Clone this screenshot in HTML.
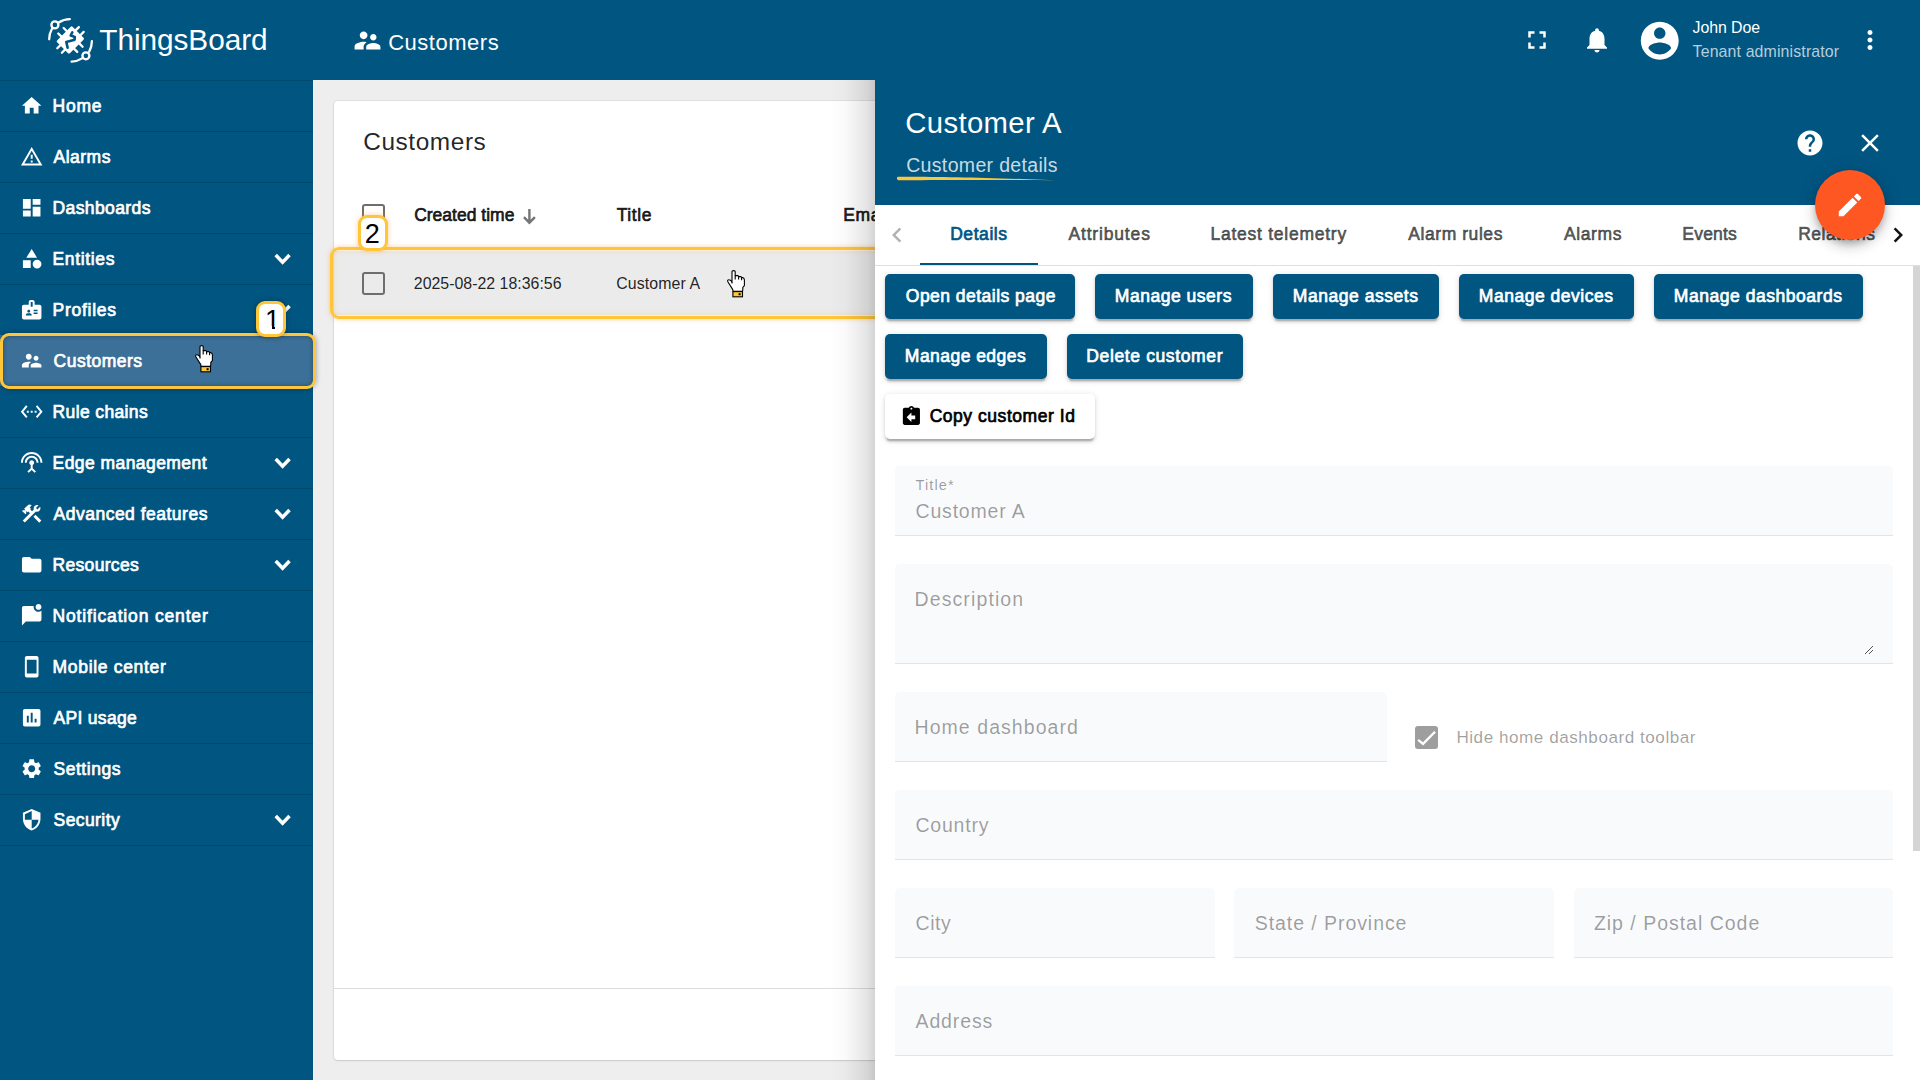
<!DOCTYPE html>
<html lang="en"><head><meta charset="utf-8"><title>ThingsBoard - Customers</title>
<style>
  *{box-sizing:border-box;margin:0;padding:0}
  html,body{width:1920px;height:1080px;overflow:hidden;background:#eee;font-family:"Liberation Sans", sans-serif;}
  #root{position:relative;width:1920px;height:1080px;overflow:hidden}
  #root>*, .abs{position:absolute}
  .tx{position:absolute;white-space:nowrap;line-height:1;font-weight:400}
  .tx.m{-webkit-text-stroke:.7px currentColor}
  .tx.b{font-weight:700}
  .ic{position:absolute;display:block}
  #top{left:0;top:0;width:1920px;height:80px;background:#005581}
  #side{left:0;top:80px;width:313px;height:1000px;background:#005581}
  .dv{position:absolute;left:0;width:313px;height:1px;background:rgba(0,0,0,.14)}
  #card{left:334px;top:101px;width:1566px;height:958.5px;background:#fff;border-radius:4px;box-shadow:0 0 0 1px rgba(0,0,0,.06),0 1px 2px rgba(0,0,0,.10)}
  #pgl{left:334px;top:988px;width:1566px;height:1px;background:#dcdcdc}
  .cb{position:absolute;width:23px;height:23px;border:2.5px solid #6e6e6e;border-radius:3px}
  #rowbg{left:334px;top:251px;width:1566px;height:64px;background:#ebebeb}
  .hl{position:absolute;border:3.3px solid #fec638;border-radius:9px;box-shadow:0 0 5px rgba(255,160,60,.5), inset 0 0 5px rgba(255,160,60,.4)}
.hl.d{box-shadow:0 0 5px rgba(0,0,0,.35), inset 0 0 4px rgba(0,0,0,.35)}
  .bdg{position:absolute;width:30px;height:36px;background:#fff;border:3.3px solid #fec638;border-radius:9px;box-shadow:0 0 5px rgba(255,160,60,.5)}
.bdg.d{box-shadow:0 0 5px rgba(0,0,0,.35)}
  #dsh{left:829px;top:80px;width:46px;height:1000px;background:linear-gradient(to right,rgba(0,0,0,0),rgba(0,0,0,.02) 35%,rgba(0,0,0,.065) 63%,rgba(0,0,0,.105) 83%,rgba(0,0,0,.17))}
#drw{left:875px;top:80px;width:1045px;height:1000px;background:#fff}
  #dhd{left:875px;top:80px;width:1045px;height:124.5px;background:#005581}
  #tabl{left:875px;top:265px;width:1045px;height:1px;background:#dfdfdf}
  #ink{left:920px;top:262.5px;width:118px;height:2.5px;background:#005581}
  .btn{position:absolute;height:45px;border-radius:5px;background:#005581;box-shadow:0 3.75px 1.25px -2.5px rgba(0,0,0,.17),0 2.5px 2.5px rgba(0,0,0,.13),0 1.25px 6.25px rgba(0,0,0,.12)}
  .btn.w{background:#fff}
  .fld{position:absolute;height:70px;background:#f9fafc;border-bottom:1px solid #e1e4e9;border-radius:5px 5px 0 0}
    #sbh{left:1913px;top:266px;width:7px;height:585px;background:#d5d5d5}
  #fab{left:1815px;top:169.5px;width:70px;height:70px;border-radius:50%;background:#ff5722;box-shadow:0 4px 6px -1px rgba(0,0,0,.2),0 7px 12px rgba(0,0,0,.14),0 2px 20px rgba(0,0,0,.12)}
  #chk{left:1415px;top:726px;width:23px;height:23px;border-radius:3px;background:#9e9e9e}
  </style></head>
<body><div id="root">
<div id="side"></div>
<div class="dv" style="top:130.5px"></div>
<div class="dv" style="top:181.5px"></div>
<div class="dv" style="top:232.5px"></div>
<div class="dv" style="top:283.5px"></div>
<div class="dv" style="top:334.5px"></div>
<div class="dv" style="top:385.5px"></div>
<div class="dv" style="top:436.5px"></div>
<div class="dv" style="top:487.5px"></div>
<div class="dv" style="top:538.5px"></div>
<div class="dv" style="top:589.5px"></div>
<div class="dv" style="top:640.5px"></div>
<div class="dv" style="top:691.5px"></div>
<div class="dv" style="top:742.5px"></div>
<div class="dv" style="top:793.5px"></div>
<div class="dv" style="top:844.5px"></div>
<div class="dv" style="top:80px"></div>
<div class="abs" style="left:0;top:335px;width:313px;height:51px;background:#3c7098"></div>
<svg class="ic" style="left:19.70px;top:94.10px;width:23.4px;height:23.4px;" viewBox="0 0 24 24"><path fill="#fff" d="M10 20v-6h4v6h5v-8h3L12 3 2 12h3v8z"/></svg>
<svg class="ic" style="left:19.70px;top:145.10px;width:23.4px;height:23.4px;" viewBox="0 0 24 24"><path fill="#fff" d="M12 5.99L19.53 19H4.47L12 5.99M12 2L1 21h22L12 2zm1 14h-2v2h2v-2zm0-6h-2v4h2v-4z"/></svg>
<svg class="ic" style="left:19.70px;top:196.10px;width:23.4px;height:23.4px;" viewBox="0 0 24 24"><path fill="#fff" d="M3 13h8V3H3v10zm0 8h8v-6H3v6zm10 0h8V11h-8v10zm0-18v6h8V3h-8z"/></svg>
<svg class="ic" style="left:19.70px;top:247.10px;width:23.4px;height:23.4px;" viewBox="0 0 24 24"><path fill="#fff" d="M12 2l-5.5 9h11z M17.5 13a4.5 4.5 0 1 0 0 9a4.5 4.5 0 1 0 0-9z M3 13.5h8v8H3z"/></svg>
<svg class="ic" style="left:19.70px;top:298.10px;width:23.4px;height:23.4px;" viewBox="0 0 24 24"><path fill="#fff" d="M20 7h-5V4c0-1.1-.9-2-2-2h-2c-1.1 0-2 .9-2 2v3H4c-1.1 0-2 .9-2 2v11c0 1.1.9 2 2 2h16c1.1 0 2-.9 2-2V9c0-1.1-.9-2-2-2zM9 12c.83 0 1.5.67 1.5 1.5S9.83 15 9 15s-1.5-.67-1.5-1.5S8.17 12 9 12zm3 6H6v-.75c0-1 2-1.5 3-1.5s3 .5 3 1.5V18zm1-9h-2V4h2v5zm5 7.5h-4V15h4v1.5zm0-3h-4V12h4v1.5z"/></svg>
<svg class="ic" style="left:19.70px;top:349.10px;width:23.4px;height:23.4px;" viewBox="0 0 24 24"><path fill="#fff" d="M16.5 12c1.38 0 2.49-1.12 2.49-2.5S17.88 7 16.5 7C15.12 7 14 8.12 14 9.5s1.12 2.5 2.5 2.5zM9 11c1.66 0 2.99-1.34 2.99-3S10.66 5 9 5C7.34 5 6 6.34 6 8s1.34 3 3 3zm7.5 3c-1.83 0-5.5.92-5.5 2.75V19h11v-2.25c0-1.83-3.67-2.75-5.5-2.75zM9 13c-2.33 0-7 1.17-7 3.5V19h7v-2.25c0-.85.33-2.34 2.37-3.47C10.5 13.1 9.66 13 9 13z"/></svg>
<svg class="ic" style="left:19.70px;top:400.10px;width:23.4px;height:23.4px;" viewBox="0 0 24 24"><path fill="#fff" d="M7.77 6.76L6.23 5.48.82 12l5.41 6.52 1.54-1.28L3.42 12l4.35-5.24zM7 13h2v-2H7v2zm10-2h-2v2h2v-2zm-6 2h2v-2h-2v2zm6.77-7.52l-1.54 1.28L20.58 12l-4.35 5.24 1.54 1.28L23.18 12l-5.41-6.52z"/></svg>
<svg class="ic" style="left:19.70px;top:451.10px;width:23.4px;height:23.4px;" viewBox="0 0 24 24"><path fill="#fff" d="M12 5c-3.87 0-7 3.13-7 7h2c0-2.76 2.24-5 5-5s5 2.24 5 5h2c0-3.87-3.13-7-7-7zm1 9.29c.88-.39 1.5-1.26 1.5-2.29 0-1.38-1.12-2.5-2.5-2.5S9.5 10.62 9.5 12c0 1.02.62 1.9 1.5 2.29v3.3L7.59 21 9 22.41l3-3 3 3L16.41 21 13 17.59v-3.3zM12 1C5.93 1 1 5.93 1 12h2c0-4.97 4.03-9 9-9s9 4.03 9 9h2c0-6.07-4.93-11-11-11z"/></svg>
<svg class="ic" style="left:19.70px;top:502.10px;width:23.4px;height:23.4px;" viewBox="0 0 24 24"><path fill="#fff" d="M13.78 15.17l2.12-2.12 6 6-2.12 2.12z M17.5 10c1.93 0 3.5-1.57 3.5-3.5 0-.58-.16-1.12-.41-1.6l-2.7 2.7-1.49-1.49 2.7-2.7C18.62 3.16 18.08 3 17.5 3 15.57 3 14 4.57 14 6.5c0 .41.08.8.21 1.16l-1.85 1.85-1.78-1.78.71-.71-1.41-1.41L12 3.49c-1.17-1.17-3.07-1.17-4.24 0L4.22 7.03l1.41 1.41H2.81l-.71.71 3.54 3.54.71-.71V9.15l1.41 1.41.71-.71 1.78 1.78-7.41 7.41 2.12 2.12L16.34 9.79c.36.13.75.21 1.16.21z"/></svg>
<svg class="ic" style="left:19.70px;top:553.10px;width:23.4px;height:23.4px;" viewBox="0 0 24 24"><path fill="#fff" d="M10 4H4c-1.1 0-1.99.9-1.99 2L2 18c0 1.1.9 2 2 2h16c1.1 0 2-.9 2-2V8c0-1.1-.9-2-2-2h-8l-2-2z"/></svg>
<svg class="ic" style="left:19.70px;top:604.10px;width:23.4px;height:23.4px;" viewBox="0 0 24 24"><path fill="#fff" d="M22 6.98V16c0 1.1-.9 2-2 2H6l-4 4V4c0-1.1.9-2 2-2h10.1c-.06.32-.1.66-.1 1 0 2.76 2.24 5 5 5 1.13 0 2.16-.39 3-1.02zM16 3c0 1.66 1.34 3 3 3s3-1.34 3-3-1.34-3-3-3-3 1.34-3 3z"/></svg>
<svg class="ic" style="left:19.70px;top:655.10px;width:23.4px;height:23.4px;" viewBox="0 0 24 24"><path fill="#fff" d="M17 1.01L7 1c-1.1 0-2 .9-2 2v18c0 1.1.9 2 2 2h10c1.1 0 2-.9 2-2V3c0-1.1-.9-1.99-2-1.99zM17 19H7V5h10v14z"/></svg>
<svg class="ic" style="left:19.70px;top:706.10px;width:23.4px;height:23.4px;" viewBox="0 0 24 24"><path fill="#fff" d="M19 3H5c-1.1 0-2 .9-2 2v14c0 1.1.9 2 2 2h14c1.1 0 2-.9 2-2V5c0-1.1-.9-2-2-2zM9 17H7v-7h2v7zm4 0h-2V7h2v10zm4 0h-2v-4h2v4z"/></svg>
<svg class="ic" style="left:19.70px;top:757.10px;width:23.4px;height:23.4px;" viewBox="0 0 24 24"><path fill="#fff" d="M19.14 12.94c.04-.3.06-.61.06-.94 0-.32-.02-.64-.07-.94l2.03-1.58c.18-.14.23-.41.12-.61l-1.92-3.32c-.12-.22-.37-.29-.59-.22l-2.39.96c-.5-.38-1.03-.7-1.62-.94l-.36-2.54c-.04-.24-.24-.41-.48-.41h-3.84c-.24 0-.43.17-.47.41l-.36 2.54c-.59.24-1.13.57-1.62.94l-2.39-.96c-.22-.08-.47 0-.59.22L2.74 8.87c-.12.21-.08.47.12.61l2.03 1.58c-.05.3-.09.63-.09.94s.02.64.07.94l-2.03 1.58c-.18.14-.23.41-.12.61l1.92 3.32c.12.22.37.29.59.22l2.39-.96c.5.38 1.03.7 1.62.94l.36 2.54c.05.24.24.41.48.41h3.84c.24 0 .44-.17.47-.41l.36-2.54c.59-.24 1.13-.56 1.62-.94l2.39.96c.22.08.47 0 .59-.22l1.92-3.32c.12-.22.07-.47-.12-.61l-2.01-1.58zM12 15.6c-1.98 0-3.6-1.62-3.6-3.6s1.62-3.6 3.6-3.6 3.6 1.62 3.6 3.6-1.62 3.6-3.6 3.6z"/></svg>
<svg class="ic" style="left:19.70px;top:808.10px;width:23.4px;height:23.4px;" viewBox="0 0 24 24"><path fill="#fff" d="M12 1L3 5v6c0 5.55 3.84 10.74 9 12 5.16-1.26 9-6.45 9-12V5l-9-4zm0 10.99h7c-.53 4.12-3.28 7.79-7 8.94V12H5V6.3l7-3.11v8.8z"/></svg>
<svg class="ic" style="left:270px;top:248px;width:26px;height:22px" viewBox="270 248 26 22"><path d="M275.7 255.05L282.6 262.3L289.5 255.05" fill="none" stroke="#fff" stroke-width="3.5" stroke-linejoin="miter"/></svg>
<svg class="ic" style="left:270px;top:299px;width:26px;height:22px" viewBox="270 299 26 22"><path d="M275.7 306.05L282.6 313.3L289.5 306.05" fill="none" stroke="#fff" stroke-width="3.5" stroke-linejoin="miter"/></svg>
<svg class="ic" style="left:270px;top:452px;width:26px;height:22px" viewBox="270 452 26 22"><path d="M275.7 459.05L282.6 466.3L289.5 459.05" fill="none" stroke="#fff" stroke-width="3.5" stroke-linejoin="miter"/></svg>
<svg class="ic" style="left:270px;top:503px;width:26px;height:22px" viewBox="270 503 26 22"><path d="M275.7 510.05L282.6 517.3L289.5 510.05" fill="none" stroke="#fff" stroke-width="3.5" stroke-linejoin="miter"/></svg>
<svg class="ic" style="left:270px;top:554px;width:26px;height:22px" viewBox="270 554 26 22"><path d="M275.7 561.05L282.6 568.3L289.5 561.05" fill="none" stroke="#fff" stroke-width="3.5" stroke-linejoin="miter"/></svg>
<svg class="ic" style="left:270px;top:809px;width:26px;height:22px" viewBox="270 809 26 22"><path d="M275.7 816.05L282.6 823.3L289.5 816.05" fill="none" stroke="#fff" stroke-width="3.5" stroke-linejoin="miter"/></svg>
<span id="m0" class="tx m" style="left:52.55px;top:98.19px;font-size:17.5px;letter-spacing:0.784px;color:#fff;">Home</span>
<span id="m1" class="tx m" style="left:53.55px;top:149.19px;font-size:17.5px;letter-spacing:0.480px;color:#fff;">Alarms</span>
<span id="m2" class="tx m" style="left:52.55px;top:200.19px;font-size:17.5px;letter-spacing:0.388px;color:#fff;">Dashboards</span>
<span id="m3" class="tx m" style="left:52.55px;top:251.19px;font-size:17.5px;letter-spacing:0.637px;color:#fff;">Entities</span>
<span id="m4" class="tx m" style="left:52.55px;top:302.19px;font-size:17.5px;letter-spacing:0.742px;color:#fff;">Profiles</span>
<span id="m5" class="tx m" style="left:53.55px;top:353.19px;font-size:17.5px;letter-spacing:0.493px;color:#fff;">Customers</span>
<span id="m6" class="tx m" style="left:52.55px;top:404.19px;font-size:17.5px;letter-spacing:0.371px;color:#fff;">Rule chains</span>
<span id="m7" class="tx m" style="left:52.55px;top:455.19px;font-size:17.5px;letter-spacing:0.435px;color:#fff;">Edge management</span>
<span id="m8" class="tx m" style="left:53.55px;top:506.19px;font-size:17.5px;letter-spacing:0.495px;color:#fff;">Advanced features</span>
<span id="m9" class="tx m" style="left:52.55px;top:557.19px;font-size:17.5px;letter-spacing:0.313px;color:#fff;">Resources</span>
<span id="m10" class="tx m" style="left:52.55px;top:608.19px;font-size:17.5px;letter-spacing:0.842px;color:#fff;">Notification center</span>
<span id="m11" class="tx m" style="left:52.55px;top:659.19px;font-size:17.5px;letter-spacing:0.681px;color:#fff;">Mobile center</span>
<span id="m12" class="tx m" style="left:53.55px;top:710.19px;font-size:17.5px;letter-spacing:0.298px;color:#fff;">API usage</span>
<span id="m13" class="tx m" style="left:53.55px;top:761.19px;font-size:17.5px;letter-spacing:0.517px;color:#fff;">Settings</span>
<span id="m14" class="tx m" style="left:53.55px;top:812.19px;font-size:17.5px;letter-spacing:0.419px;color:#fff;">Security</span>
<div id="top"></div>
<svg class="ic" style="left:44px;top:12px;width:56px;height:56px" viewBox="0 0 56 56" fill="none" stroke="#fff" stroke-width="2.3" stroke-linecap="round">
<g transform="translate(26.3 28.05) rotate(45)">
<rect x="-9.05" y="-10.95" width="18.1" height="21.9" rx="1.3" fill="#fff" stroke="none"/>
<path d="M-9 -3.8H-13.2M-9 3.85H-13.2M9 -4H13.4M9 3.5H13.3M-3.1 -10.9V-15.2M3.7 -10.9V-15.2M-3.4 10.9V15M3 10.9V14.9"/>
</g>
<path d="M28.3 20.3L26.7 23.5L30.8 24.9L30.6 27.7L22.3 29.9L23.6 35.7" stroke="#005581" stroke-width="2.6" stroke-linejoin="round"/>
<circle cx="10.9" cy="12.9" r="3.5" stroke-width="2.35"/><circle cx="41.9" cy="43.8" r="3.5" stroke-width="2.35"/>
<path d="M5.2 27.3A21.3 21.3 0 0 1 8 16.8M14.7 10.5A21 21 0 0 1 25.8 7.2"/>
<path d="M47.9 29.1A21.5 21.5 0 0 1 45.2 39.6M38.1 46.4A21.5 21.5 0 0 1 27.6 49.7"/>
</svg>
<span id="logo" class="tx r" style="left:99.30px;top:24.77px;font-size:29.8px;letter-spacing:-0.067px;color:#fff;">ThingsBoard</span>
<svg class="ic" style="left:352.20px;top:24.50px;width:31px;height:31px;" viewBox="0 0 24 24"><path fill="#fff" d="M16.5 12c1.38 0 2.49-1.12 2.49-2.5S17.88 7 16.5 7C15.12 7 14 8.12 14 9.5s1.12 2.5 2.5 2.5zM9 11c1.66 0 2.99-1.34 2.99-3S10.66 5 9 5C7.34 5 6 6.34 6 8s1.34 3 3 3zm7.5 3c-1.83 0-5.5.92-5.5 2.75V19h11v-2.25c0-1.83-3.67-2.75-5.5-2.75zM9 13c-2.33 0-7 1.17-7 3.5V19h7v-2.25c0-.85.33-2.34 2.37-3.47C10.5 13.1 9.66 13 9 13z"/></svg>
<span id="bc" class="tx r" style="left:388.20px;top:32.38px;font-size:22px;letter-spacing:0.518px;color:#fff;">Customers</span>
<svg class="ic" style="left:1522.40px;top:25.00px;width:30px;height:30px;" viewBox="0 0 24 24"><path fill="#fff" d="M7 14H5v5h5v-2H7v-3zm-2-4h2V7h3V5H5v5zm12 7h-3v2h5v-5h-2v3zM14 5v2h3v3h2V5h-5z"/></svg>
<svg class="ic" style="left:1582.40px;top:25.40px;width:30px;height:30px;" viewBox="0 0 24 24"><path fill="#fff" d="M12 22c1.1 0 2-.9 2-2h-4c0 1.1.89 2 2 2zm6-6v-5c0-3.07-1.64-5.64-4.5-6.32V4c0-.83-.67-1.5-1.5-1.5s-1.5.67-1.5 1.5v.68C7.63 5.36 6 7.92 6 11v5l-2 2v1h16v-1l-2-2z"/></svg>
<svg class="ic" style="left:1637.45px;top:17.65px;width:45.5px;height:45.5px;" viewBox="0 0 24 24"><path fill="#fff" d="M12 2C6.48 2 2 6.48 2 12s4.48 10 10 10 10-4.48 10-10S17.52 2 12 2zm0 3c1.66 0 3 1.34 3 3s-1.34 3-3 3-3-1.34-3-3 1.34-3 3-3zm0 14.2c-2.5 0-4.71-1.28-6-3.22.03-1.99 4-3.08 6-3.08 1.99 0 5.97 1.09 6 3.08-1.29 1.94-3.5 3.22-6 3.22z"/></svg>
<span id="un" class="tx r" style="left:1692.60px;top:19.54px;font-size:15.9px;letter-spacing:-0.069px;color:#fff;">John Doe</span>
<span id="ur" class="tx r" style="left:1692.60px;top:43.54px;font-size:15.9px;letter-spacing:0.133px;color:rgba(255,255,255,.72);">Tenant administrator</span>
<svg class="ic" style="left:1855.00px;top:25.20px;width:30px;height:30px;" viewBox="0 0 24 24"><path fill="#fff" d="M12 8c1.1 0 2-.9 2-2s-.9-2-2-2-2 .9-2 2 .9 2 2 2zm0 2c-1.1 0-2 .9-2 2s.9 2 2 2 2-.9 2-2-.9-2-2-2zm0 6c-1.1 0-2 .9-2 2s.9 2 2 2 2-.9 2-2-.9-2-2-2z"/></svg>
<div id="card"></div>
<div id="pgl"></div>
<span id="ct" class="tx r" style="left:363.20px;top:130.35px;font-size:24.4px;letter-spacing:0.585px;color:rgba(0,0,0,.87);">Customers</span>
<div id="rowbg"></div>
<div class="cb" style="left:362px;top:204px"></div>
<div class="cb" style="left:362px;top:271.5px"></div>
<span id="h1" class="tx m" style="left:414.15px;top:207.19px;font-size:17.5px;letter-spacing:0.005px;color:rgba(0,0,0,.87);">Created time</span>
<svg class="ic" style="left:519px;top:205px;width:22px;height:24px" viewBox="519 205 22 24"><path d="M529.4 209V222.4M523.9 217.2L529.4 222.7L534.9 217.2" fill="none" stroke="#757575" stroke-width="2.4" stroke-linejoin="miter"/></svg>
<span id="h2" class="tx m" style="left:616.65px;top:207.19px;font-size:17.5px;letter-spacing:0.580px;color:rgba(0,0,0,.87);">Title</span>
<span id="h3" class="tx m" style="left:843.35px;top:207.19px;font-size:17.5px;letter-spacing:0.607px;color:rgba(0,0,0,.87);">Email</span>
<span id="c1" class="tx r" style="left:413.80px;top:275.54px;font-size:15.9px;letter-spacing:0.010px;color:rgba(0,0,0,.87);">2025-08-22 18:36:56</span>
<span id="c2" class="tx r" style="left:616.20px;top:275.54px;font-size:15.9px;letter-spacing:0.090px;color:rgba(0,0,0,.87);">Customer A</span>
<div class="hl" style="left:330px;top:247.4px;width:1575px;height:71.4px"></div>
<div id="dsh"></div>
<div id="drw"></div>
<div id="dhd"></div>
<span id="dt" class="tx r" style="left:905.20px;top:108.20px;font-size:29.3px;letter-spacing:0.375px;color:#fff;">Customer A</span>
<span id="ds" class="tx r" style="left:906.20px;top:156.49px;font-size:19.5px;letter-spacing:0.336px;color:rgba(255,255,255,.8);">Customer details</span>
<svg class="ic" style="left:895px;top:172px;width:166px;height:12px" viewBox="895 172 166 12"><path d="M898 176.8C930 176.5 990 177.6 1055.4 180.3C1000 179.9 940 179.7 898.6 180.3C896.6 180.2 896.4 177.1 898 176.8Z" fill="#fec638"/></svg>
<svg class="ic" style="left:1795.00px;top:128.00px;width:30px;height:30px;" viewBox="0 0 24 24"><path fill="#fff" d="M12 2C6.48 2 2 6.48 2 12s4.48 10 10 10 10-4.48 10-10S17.52 2 12 2zm1 17h-2v-2h2v2zm2.07-7.75l-.9.92C13.45 12.9 13 13.5 13 15h-2v-.5c0-1.1.45-2.1 1.17-2.83l1.24-1.26c.37-.36.59-.86.59-1.41 0-1.1-.9-2-2-2s-2 .9-2 2H8c0-2.21 1.79-4 4-4s4 1.79 4 4c0 .88-.36 1.68-.93 2.25z"/></svg>
<svg class="ic" style="left:1855.40px;top:128.00px;width:30px;height:30px;" viewBox="0 0 24 24"><path fill="#fff" d="M19 6.41L17.59 5 12 10.59 6.41 5 5 6.41 10.59 12 5 17.59 6.41 19 12 13.41 17.59 19 19 17.59 13.41 12z"/></svg>
<div id="tabl"></div>
<div id="ink"></div>
<svg class="ic" style="left:882.00px;top:220.20px;width:30px;height:30px;" viewBox="0 0 24 24"><path fill="rgba(0,0,0,.3)" d="M15.41 7.41L14 6l-6 6 6 6 1.41-1.41L10.83 12z"/></svg>
<span id="t0" class="tx m" style="left:950.15px;top:226.19px;font-size:17.5px;letter-spacing:0.576px;color:#005581;">Details</span>
<span id="t1" class="tx m" style="left:1068.45px;top:226.19px;font-size:17.5px;letter-spacing:0.836px;color:rgba(0,0,0,.6);">Attributes</span>
<span id="t2" class="tx m" style="left:1210.45px;top:226.19px;font-size:17.5px;letter-spacing:0.750px;color:rgba(0,0,0,.6);">Latest telemetry</span>
<span id="t3" class="tx m" style="left:1408.25px;top:226.19px;font-size:17.5px;letter-spacing:0.566px;color:rgba(0,0,0,.6);">Alarm rules</span>
<span id="t4" class="tx m" style="left:1564.05px;top:226.19px;font-size:17.5px;letter-spacing:0.580px;color:rgba(0,0,0,.6);">Alarms</span>
<span id="t5" class="tx m" style="left:1682.35px;top:226.19px;font-size:17.5px;letter-spacing:0.190px;color:rgba(0,0,0,.6);">Events</span>
<span id="t6" class="tx m" style="left:1798.25px;top:226.19px;font-size:17.5px;letter-spacing:0.462px;color:rgba(0,0,0,.6);">Relations</span>
<div class="abs" style="left:1877px;top:206px;width:35px;height:58px;background:#fff"></div>
<svg class="ic" style="left:1883.00px;top:220.20px;width:30px;height:30px;" viewBox="0 0 24 24"><path fill="#111" d="M10 6L8.59 7.410 13.17 12l-4.58 4.590L10 18l6-6z"/></svg>
<div class="btn" style="left:885px;top:274px;width:190px"></div>
<div class="btn" style="left:1095px;top:274px;width:158px"></div>
<div class="btn" style="left:1273px;top:274px;width:166px"></div>
<div class="btn" style="left:1459px;top:274px;width:175px"></div>
<div class="btn" style="left:1654px;top:274px;width:209px"></div>
<div class="btn" style="left:885px;top:334px;width:162px"></div>
<div class="btn" style="left:1067px;top:334px;width:176px"></div>
<div class="btn w" style="left:885px;top:394px;width:210px"></div>
<svg class="ic" style="left:899.80px;top:405.00px;width:22.8px;height:22.8px;" viewBox="0 0 24 24"><path fill="#000" d="M19 3h-4.18C14.4 1.84 13.3 1 12 1c-1.3 0-2.4.84-2.820 2H5c-1.1 0-2 .9-2 2v14c0 1.1.9 2 2 2h14c1.1 0 2-.9 2-2V5c0-1.1-.9-2-2-2zm-7 0c.55 0 1 .45 1 1s-.45 1-1 1-1-.45-1-1 .45-1 1-1zm4 12h-4v3l-5-5 5-5v3h4v4z"/></svg>
<span id="b0" class="tx m" style="left:905.85px;top:288.19px;font-size:17.5px;letter-spacing:0.468px;color:#fff;">Open details page</span>
<span id="b1" class="tx m" style="left:1114.85px;top:288.19px;font-size:17.5px;letter-spacing:0.514px;color:#fff;">Manage users</span>
<span id="b2" class="tx m" style="left:1292.85px;top:288.19px;font-size:17.5px;letter-spacing:0.531px;color:#fff;">Manage assets</span>
<span id="b3" class="tx m" style="left:1478.85px;top:288.19px;font-size:17.5px;letter-spacing:0.509px;color:#fff;">Manage devices</span>
<span id="b4" class="tx m" style="left:1673.85px;top:288.19px;font-size:17.5px;letter-spacing:0.531px;color:#fff;">Manage dashboards</span>
<span id="b5" class="tx m" style="left:904.85px;top:348.19px;font-size:17.5px;letter-spacing:0.461px;color:#fff;">Manage edges</span>
<span id="b6" class="tx m" style="left:1086.35px;top:348.19px;font-size:17.5px;letter-spacing:0.622px;color:#fff;">Delete customer</span>
<span id="b7" class="tx m" style="left:929.65px;top:408.19px;font-size:17.5px;letter-spacing:0.540px;color:#000;">Copy customer Id</span>
<div class="fld" style="left:895px;top:466px;width:998px;height:70px"></div>
<div class="fld" style="left:895px;top:564px;width:998px;height:100px"></div>
<div class="fld" style="left:895px;top:692px;width:492px;height:70px"></div>
<div class="fld" style="left:895px;top:790px;width:998px;height:70px"></div>
<div class="fld" style="left:895px;top:888px;width:320px;height:70px"></div>
<div class="fld" style="left:1234px;top:888px;width:320px;height:70px"></div>
<div class="fld" style="left:1574px;top:888px;width:319px;height:70px"></div>
<div class="fld" style="left:895px;top:986px;width:998px;height:70px"></div>
<span id="f0" class="tx r" style="left:915.50px;top:477.64px;font-size:14.6px;letter-spacing:1.094px;color:rgba(0,0,0,.38);">Title*</span>
<span id="f1" class="tx r" style="left:915.50px;top:502.49px;font-size:19.5px;letter-spacing:0.818px;color:rgba(0,0,0,.38);">Customer A</span>
<span id="f2" class="tx r" style="left:914.50px;top:590.49px;font-size:19.5px;letter-spacing:1.111px;color:rgba(0,0,0,.38);">Description</span>
<span id="f3" class="tx r" style="left:914.50px;top:718.49px;font-size:19.5px;letter-spacing:1.058px;color:rgba(0,0,0,.38);">Home dashboard</span>
<span id="f4" class="tx r" style="left:1456.40px;top:728.52px;font-size:17.1px;letter-spacing:0.534px;color:rgba(0,0,0,.38);">Hide home dashboard toolbar</span>
<span id="f5" class="tx r" style="left:915.50px;top:816.49px;font-size:19.5px;letter-spacing:0.779px;color:rgba(0,0,0,.38);">Country</span>
<span id="f6" class="tx r" style="left:915.50px;top:914.49px;font-size:19.5px;letter-spacing:0.556px;color:rgba(0,0,0,.38);">City</span>
<span id="f7" class="tx r" style="left:1254.80px;top:914.49px;font-size:19.5px;letter-spacing:0.933px;color:rgba(0,0,0,.38);">State / Province</span>
<span id="f8" class="tx r" style="left:1593.90px;top:914.49px;font-size:19.5px;letter-spacing:0.986px;color:rgba(0,0,0,.38);">Zip / Postal Code</span>
<span id="f9" class="tx r" style="left:915.50px;top:1012.49px;font-size:19.5px;letter-spacing:0.869px;color:rgba(0,0,0,.38);">Address</span>
<div id="chk"></div>
<svg class="ic" style="left:1415px;top:726px;width:23px;height:23px" viewBox="0 0 24 24"><path d="M3.3 14.4L8.4 18.6L20.9 6" fill="none" stroke="#fff" stroke-width="2.5"/></svg>
<svg class="ic" style="left:1864px;top:644.6px;width:10px;height:10px" viewBox="0 0 10 10"><path d="M1 9L9 1M5 9L9 5" stroke="#555" stroke-width="1" fill="none"/></svg>
<div id="sbh"></div>
<div id="fab"></div>
<svg class="ic" style="left:1835.00px;top:189.50px;width:30px;height:30px;" viewBox="0 0 24 24"><path fill="#fff" d="M3 17.25V21h3.75L17.81 9.94l-3.75-3.75L3 17.25zM20.71 7.04c.39-.39.39-1.02 0-1.41l-2.34-2.34c-.39-.39-1.02-.39-1.41 0l-1.83 1.83 3.750 3.750 1.830-1.830z"/></svg>
<div class="hl d" style="left:0px;top:332.8px;width:316.2px;height:56.4px"></div>
<div class="bdg d" style="left:256px;top:301px"></div>
<span id="n1" class="tx r" style="left:265.00px;top:307.14px;font-size:27px;letter-spacing:0.000px;color:#000;">1</span>
<div class="abs" style="left:265px;top:326.4px;width:6.9px;height:3.4px;background:#fff"></div><div class="abs" style="left:275.1px;top:326.4px;width:5px;height:3.4px;background:#fff"></div>
<div class="bdg" style="left:358px;top:215.2px"></div>
<span id="n2" class="tx r" style="left:364.80px;top:221.14px;font-size:27px;letter-spacing:0.000px;color:#000;">2</span>
<svg class="ic" style="left:194.6px;top:345.4px;width:18px;height:28px" viewBox="0 0 18 28">
  <path d="M5 1.6Q5 .6 6.6 .6Q8.2 .6 8.2 1.6V5.6H10.6Q11.6 5.6 11.6 6.6H13.6Q14.6 6.6 14.6 7.6H15.6Q17.4 8.2 17.4 10V15.6L15.8 17.4V20L15.4 21.2H6L5.8 19.6L1 12Q.4 11 .8 10.2Q1.6 9.4 3.4 10.2L5 12Z" fill="#fff" stroke="#000" stroke-width="1.1" stroke-linejoin="round"/>
  <path d="M5 12V13.6M8.2 5.6V9.4M11.6 6.6V9.6M14.6 7.6V10.2" stroke="#000" stroke-width="1.1" fill="none"/>
  <rect x="5.9" y="21.6" width="9.6" height="5.2" fill="#fec638" stroke="#000" stroke-width="1.1"/>
  <rect x="11.6" y="23.2" width="2" height="2" fill="#000"/></svg>
<svg class="ic" style="left:726.6px;top:270.4px;width:18px;height:28px" viewBox="0 0 18 28">
  <path d="M5 1.6Q5 .6 6.6 .6Q8.2 .6 8.2 1.6V5.6H10.6Q11.6 5.6 11.6 6.6H13.6Q14.6 6.6 14.6 7.6H15.6Q17.4 8.2 17.4 10V15.6L15.8 17.4V20L15.4 21.2H6L5.8 19.6L1 12Q.4 11 .8 10.2Q1.6 9.4 3.4 10.2L5 12Z" fill="#fff" stroke="#000" stroke-width="1.1" stroke-linejoin="round"/>
  <path d="M5 12V13.6M8.2 5.6V9.4M11.6 6.6V9.6M14.6 7.6V10.2" stroke="#000" stroke-width="1.1" fill="none"/>
  <rect x="5.9" y="21.6" width="9.6" height="5.2" fill="#fec638" stroke="#000" stroke-width="1.1"/>
  <rect x="11.6" y="23.2" width="2" height="2" fill="#000"/></svg>
</div></body></html>
